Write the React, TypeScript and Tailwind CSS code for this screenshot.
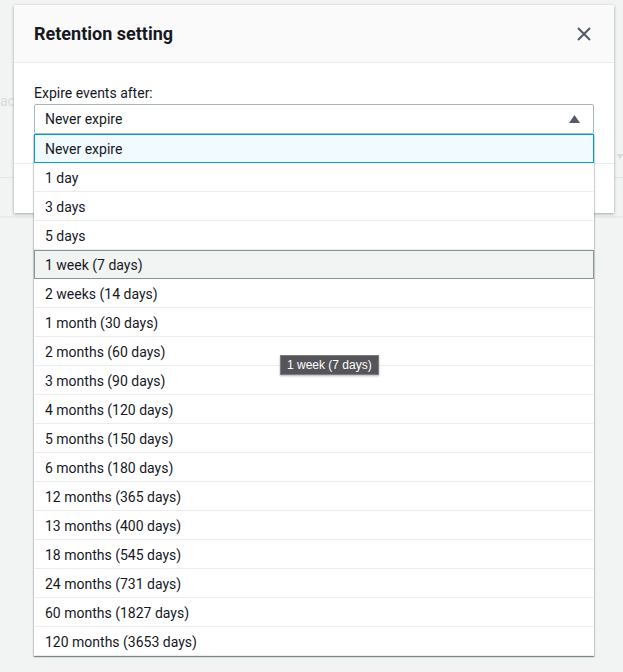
import React from 'react';

const options = [
    'Never expire',
    '1 day',
    '3 days',
    '5 days',
    '1 week (7 days)',
    '2 weeks (14 days)',
    '1 month (30 days)',
    '2 months (60 days)',
    '3 months (90 days)',
    '4 months (120 days)',
    '5 months (150 days)',
    '6 months (180 days)',
    '12 months (365 days)',
    '13 months (400 days)',
    '18 months (545 days)',
    '24 months (731 days)',
    '60 months (1827 days)',
    '120 months (3653 days)',
];

const selected = 'Never expire';
const hovered = '1 week (7 days)';

export default function App() {
    return (
        <div className="relative flex h-[672px] w-[623px] items-start overflow-hidden bg-[#f2f3f3] pl-[14px] pt-[5px] text-[#16191f]" style={{ fontFamily: 'Roboto, "Noto Sans", sans-serif' }}>
            {/* page behind the modal */}
            <div className="absolute left-0 top-[91px] text-[14px] text-[#d5dbdb]">act</div>
            <div className="absolute left-0 right-0 top-[177px] h-px bg-[#dde9ef]" />
            <svg className="absolute right-0 top-[154px]" width="6" height="6" viewBox="0 0 6 6">
                <path d="M0 0h6L3 5z" fill="#d5dbdb" />
            </svg>
            <div className="absolute left-0 right-0 top-[216px] h-[2px] bg-[#e9ebeb]" />

            {/* modal */}
            <div className="relative w-[600px] bg-white shadow-[0_1px_3px_0_rgba(0,28,36,0.35)]">
                <div className="flex h-[58px] items-center justify-between border-b border-[#eaeded] bg-[#fafafa] px-5">
                    <h2 className="text-[18px] font-bold leading-[22px]">Retention setting</h2>
                    <svg width="14" height="14" viewBox="0 0 14 14" className="mr-[3px]" fill="none" stroke="#545b64" strokeWidth="2">
                        <path d="M1 1l12 12M13 1L1 13" />
                    </svg>
                </div>
                <div className="px-5 pb-[29px] pt-5">
                    <label className="block text-[14px] leading-[21px]">Expire events after:</label>
                    <div className="relative">
                        <div className="flex h-[30px] items-center justify-between rounded-[2px] border border-[#aab7b8] bg-white pl-[10px] pr-[13px] text-[14px]">
                            <span>{selected}</span>
                            <svg width="11" height="8" viewBox="0 0 11 8">
                                <path d="M5.5 0L11 8H0z" fill="#545b64" />
                            </svg>
                        </div>
                        <ul className="absolute left-0 right-0 top-full z-10 bg-white shadow-[0_1px_1px_0_rgba(0,28,36,0.3),1px_1px_1px_0_rgba(0,28,36,0.15),-1px_1px_1px_0_rgba(0,28,36,0.15)]">
                            {options.map(opt => {
                                const isSel = opt === selected;
                                const isHover = opt === hovered;
                                return (
                                    <li
                                        key={opt}
                                        className={
                                            isSel
                                                ? 'flex h-[29px] items-center border border-[#00a1c9] bg-[#f1faff] px-[10px] pt-px text-[14px]'
                                                : isHover
                                                ? 'flex h-[29px] items-center border border-[#879596] bg-[#f2f3f3] px-[10px] pt-px text-[14px]'
                                                : 'flex h-[29px] items-center border border-transparent border-b-[#eaeded] px-[10px] pt-px text-[14px]'
                                        }
                                    >
                                        {opt}
                                    </li>
                                );
                            })}
                        </ul>
                    </div>
                </div>
                <div className="h-[50px] border-t border-[#eaeded]" />
            </div>

            {/* native title tooltip */}
            <div
                className="absolute left-[280px] top-[355px] z-20 border border-[#7c7c80] bg-[#555559] px-[6px] py-[2px] text-[12px] leading-[14px] text-white shadow-[0_1px_2px_rgba(0,0,0,0.3)]"
                style={{ fontFamily: '"Liberation Sans", Arial, sans-serif' }}
            >
                1 week (7 days)
            </div>
        </div>
    );
}
